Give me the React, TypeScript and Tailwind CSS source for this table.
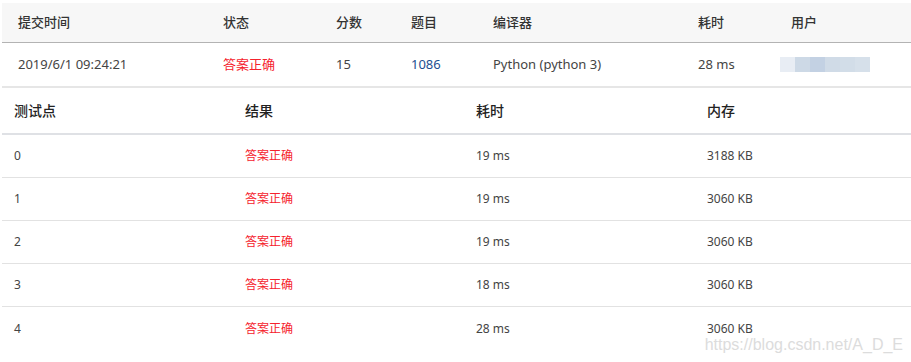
import React from "react";

const font = { fontFamily: '"Segoe UI", "Noto Sans", "Noto Sans CJK SC", sans-serif' };

const tests = [
  { id: "0", time: "19 ms", mem: "3188 KB" },
  { id: "1", time: "19 ms", mem: "3060 KB" },
  { id: "2", time: "19 ms", mem: "3060 KB" },
  { id: "3", time: "18 ms", mem: "3060 KB" },
  { id: "4", time: "28 ms", mem: "3060 KB" },
];

const topCols = "grid-cols-[205px_113px_75px_82px_205px_93px_1fr]";

export default function App() {
  return (
    <div className="relative w-[911px] h-[362px] bg-white overflow-hidden pt-[3px] pl-[2px] text-[#333]" style={font}>
      {/* top submission table */}
      <div className={`grid ${topCols} h-[40px] items-center bg-[#f7f7f7] border-b border-[#b3b3b3] text-[13px] font-medium text-[#333]`}>
        <div className="pl-4">提交时间</div>
        <div className="pl-4">状态</div>
        <div className="pl-4">分数</div>
        <div className="pl-4">题目</div>
        <div className="pl-4">编译器</div>
        <div className="pl-4">耗时</div>
        <div className="pl-4">用户</div>
      </div>
      <div className={`grid ${topCols} h-[45px] items-center border-b-2 border-[#e6e6e6] text-[13px] text-[#444]`}>
        <div className="pl-4">2019/6/1 09:24:21</div>
        <div className="pl-4 text-[#f5222d]">答案正确</div>
        <div className="pl-4">15</div>
        <div className="pl-4 text-[#1d4f91]">1086</div>
        <div className="pl-4">Python (python 3)</div>
        <div className="pl-4">28 ms</div>
        <div className="flex h-[15px] ml-[5px]">
          <div className="w-[15px] bg-[#e8edf4]" />
          <div className="w-[15px] bg-[#cdd9e6]" />
          <div className="w-[15px] bg-[#c3d1e3]" />
          <div className="w-[15px] bg-[#d0dbe7]" />
          <div className="w-[15px] bg-[#d2dde8]" />
          <div className="w-[15px] bg-[#d6e0ea]" />
        </div>
      </div>

      {/* test point table */}
      <div className="w-[924px]">
        <div className="grid grid-cols-[231px_231px_231px_231px] h-[47px] items-center border-b-2 border-[#dfe1e5] text-[14px] font-medium text-[#222]">
          <div className="pl-3">测试点</div>
          <div className="pl-3">结果</div>
          <div className="pl-3">耗时</div>
          <div className="pl-3">内存</div>
        </div>
        {tests.map((t, i) => (
          <div
            key={t.id}
            className={`grid grid-cols-[231px_231px_231px_231px] h-[43px] items-center text-[12px] text-[#444] ${
              i < tests.length - 1 ? "border-b border-[#e2e2e2]" : ""
            }`}
          >
            <div className="pl-3">{t.id}</div>
            <div className="pl-3 text-[#f5222d]">答案正确</div>
            <div className="pl-3">{t.time}</div>
            <div className="pl-3">{t.mem}</div>
          </div>
        ))}
      </div>

      <div
        className="absolute right-[8px] bottom-[9px] text-[16px] text-[#dcdcdc] leading-none"
        style={{ fontFamily: '"Liberation Sans", Arial, sans-serif' }}
      >
        https://blog.csdn.net/A_D_E
      </div>
    </div>
  );
}
